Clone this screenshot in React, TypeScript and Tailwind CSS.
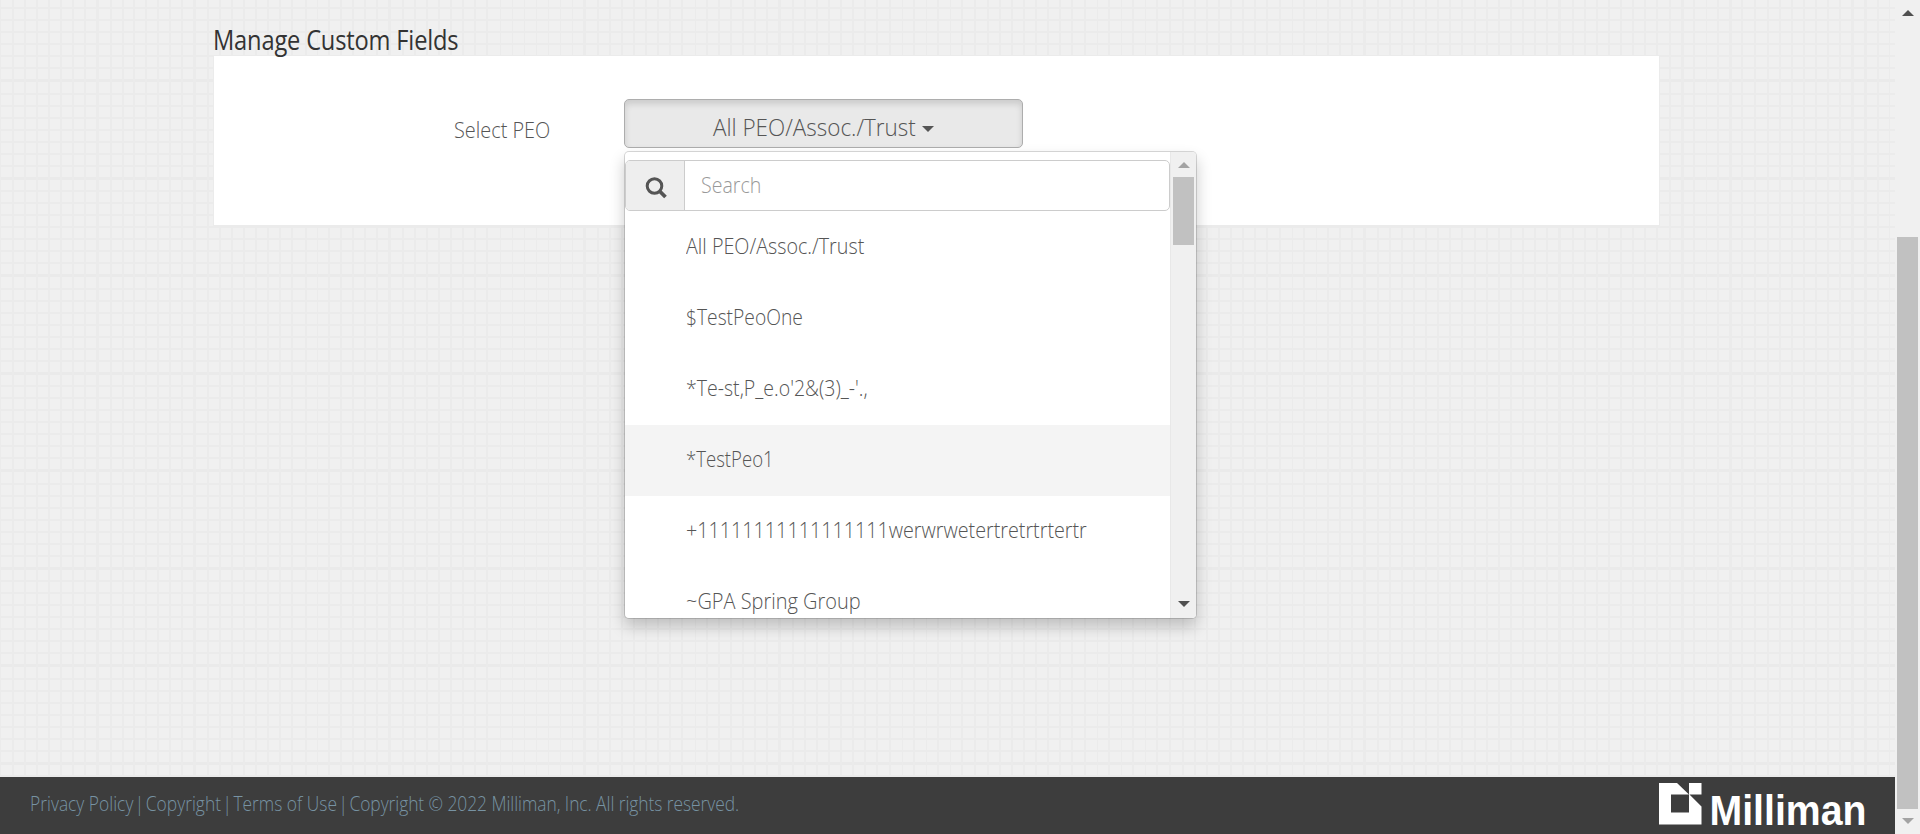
const GRID =
  "bg-[#f0f0f0] bg-[repeating-linear-gradient(to_right,#ebebeb_0_1px,transparent_1px_12px,#ebebeb_12px_14px,transparent_14px_24px,#ebebeb_24px_26px,transparent_26px_36px,#ebebeb_36px_38px,transparent_38px_48px,#ebebeb_48px_50px,transparent_50px_60px,#ebebeb_60px_62px,transparent_62px_72px,#ebebeb_72px_74px,transparent_74px_84px,#ebebeb_84px_86px,transparent_86px_96px,#ebebeb_96px_97.5px),repeating-linear-gradient(to_bottom,transparent_0px_7.5px,#ebebeb_7.5px_9.5px,transparent_9.5px_19.5px,#ebebeb_19.5px_21.5px,transparent_21.5px_31.5px,#ebebeb_31.5px_33.5px,transparent_33.5px_43.5px,#ebebeb_43.5px_45.5px,transparent_45.5px_55.5px,#ebebeb_55.5px_57.5px,transparent_57.5px_67.5px,#ebebeb_67.5px_69.5px,transparent_69.5px_79.5px,#eaeaea_79.5px_82.5px,transparent_82.5px_93px,#ebebeb_93px_95px,transparent_95px_97.5px)]";

const OPTIONS = [
  { name: "All PEO/Assoc./Trust", fit: "scale-x-[0.897]" },
  { name: "$TestPeoOne", fit: "scale-x-[0.875]" },
  { name: "*Te-st,P_e.o'2&(3)_-'.,", fit: "scale-x-[0.888]" },
  { name: "*TestPeo1", fit: "scale-x-[0.845]", active: true },
  { name: "+11111111111111111werwrwetertretrtrtertr", fit: "scale-x-[0.897]" },
  { name: "~GPA Spring Group", fit: "scale-x-[0.907]" },
];

const LINKS = ["Privacy Policy", "Copyright", "Terms of Use"];

function Arrow({ up = false, className }: { up?: boolean; className: string }) {
  return (
    <svg width="12" height="6" viewBox="0 0 12 6" className={className} fill="currentColor">
      <path d={up ? "M0 6L6 0L12 6Z" : "M0 0H12L6 6Z"} />
    </svg>
  );
}

function Dropdown() {
  return (
    <div className="absolute left-0 top-[52px] z-10 flex h-[468px] w-[573px] overflow-hidden rounded-[5px] border border-black/15 bg-white bg-clip-padding shadow-[0_8px_15px_rgba(0,0,0,0.2)]">
      <div className="w-[545px] shrink-0 pt-2">
        <div className="flex h-[51px] rounded-[5px] border border-[#ccc]">
          <div className="flex w-[59px] items-center justify-center rounded-l-[4px] border-r border-[#ccc] bg-[#eee] text-[#555]">
            <svg width="22" height="22" viewBox="0 0 22 22" fill="none" stroke="currentColor" className="ml-px mt-[4px]">
              <circle cx="9.500" cy="9" r="7.300" strokeWidth="3" />
              <path d="M14.500 14L20.500 20" strokeWidth="3.800" />
            </svg>
          </div>
          <div className="flex items-center pl-[16px]">
            <span className="origin-left scale-x-[0.89] pb-[2px] text-[22px] text-[#999]">Search</span>
          </div>
        </div>
        <ul className="pt-px">
          {OPTIONS.map((o) => (
            <li
              key={o.name}
              className={
                o.active
                  ? "flex h-[71px] items-center bg-[#f4f4f4] pb-[5px] pl-[61px]"
                  : "flex h-[71px] items-center pb-[5px] pl-[61px]"
              }
            >
              <span className={`origin-left whitespace-nowrap text-[22px] leading-[30px] ${o.fit}`}>{o.name}</span>
            </li>
          ))}
        </ul>
      </div>
      <div className="flex flex-1 flex-col items-center justify-between border-l border-[#e8e8e8] bg-[#f0f0f0] pb-[11px] pt-[10px]">
        <div className="flex flex-col items-center gap-[9px]">
          <Arrow up className="text-[#a3a3a3]" />
          <div className="h-[68px] w-[21px] bg-[#c1c1c1]" />
        </div>
        <Arrow className="text-[#505050]" />
      </div>
    </div>
  );
}

function Logo() {
  return (
    <svg width="208" height="52" viewBox="0 0 208 52" fill="#fff" className="overflow-visible">
      <path fillRule="evenodd" d="M0 1H18L30 12.500V1H42.500V12.500H30.500L42.500 24.500V42.500H0ZM12 12.500V30.500H30V12.500Z" />
      <text
        x="50.500"
        y="42.500"
        textLength="157"
        lengthAdjust="spacingAndGlyphs"
        className="font-['Liberation_Sans'] text-[42px] font-bold"
      >
        Milliman
      </text>
    </svg>
  );
}

export default function App() {
  return (
    <div className="flex h-[834px] w-full font-['Open_Sans',sans-serif] font-light text-[#555]">
      <div className="flex min-w-0 flex-1 flex-col">
        <main className={`flex-1 pl-[213px] ${GRID}`}>
          <h1 className="h-[55px] origin-left scale-x-[0.893] pt-[22px] text-[26.500px] leading-[36px] font-normal tracking-[-0.200px] text-[#333]">
            Manage Custom Fields
          </h1>
          <section className="flex h-[171px] w-[1447px] border border-[#ebebeb] bg-white pt-[43px]">
            <div className="w-[410px] pl-[240px] pt-[16px]">
              <span className="inline-block origin-left scale-x-[0.925] whitespace-nowrap text-[21.500px] leading-[30px]">
                Select PEO
              </span>
            </div>
            <div className="relative">
              <button className="flex h-[49px] w-[399px] items-center justify-center rounded-[5px] border border-[#adadad] bg-[#e9e9e9] shadow-[inset_0_4px_6px_rgba(0,0,0,0.13)]">
                <span className="-mx-[7.500px] scale-x-[0.936] whitespace-nowrap pt-[7px] text-[24px] leading-[32px]">
                  All PEO/Assoc./Trust
                </span>
                <Arrow className="ml-[7px] mt-[10px]" />
              </button>
              <Dropdown />
            </div>
          </section>
        </main>
        <footer className="flex h-[57px] justify-between bg-[#3d3d3d] pl-[30px] pr-[28px]">
          <p className="flex w-[710px] origin-left scale-x-[0.888] whitespace-nowrap pt-[13px] text-[19.600px] leading-[28px] text-[#7793a3]">
            {LINKS.map((link) => (
              <span key={link} className="flex shrink-0">
                {link}
                <span className="w-[14px] text-center">|</span>
              </span>
            ))}
            <span className="shrink-0 tracking-[-0.060px]">Copyright © 2022 Milliman, Inc. All rights reserved.</span>
          </p>
          <div className="pt-[5px]">
            <Logo />
          </div>
        </footer>
      </div>
      <div className="flex w-[25px] flex-col items-center bg-[#f0f0f0] pt-[10px]">
        <Arrow up className="text-[#505050]" />
        <div className="mt-[221px] h-[572px] w-[21px] bg-[#c1c1c1]" />
        <Arrow className="mt-[9px] text-[#a3a3a3]" />
      </div>
    </div>
  );
}
